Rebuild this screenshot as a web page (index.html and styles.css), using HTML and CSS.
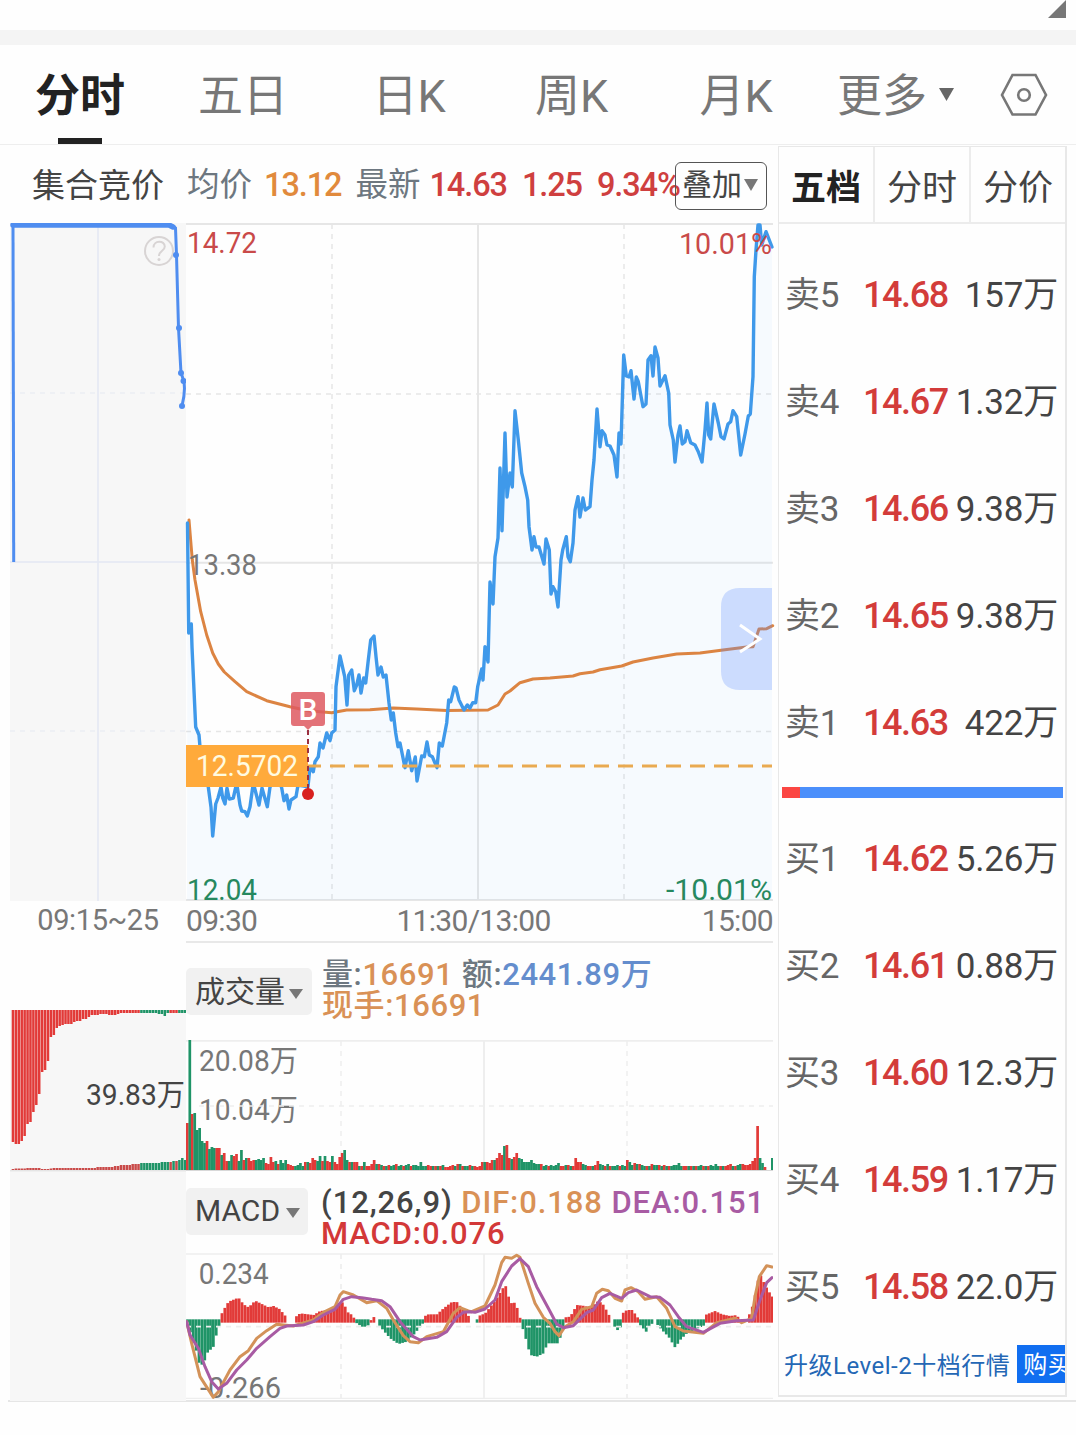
FILE: index.html
```html
<!DOCTYPE html>
<html lang="zh-CN">

<head>
  <meta charset="UTF-8">
  <meta name="viewport" content="width=device-width, initial-scale=1.0">
  <title>分时行情</title>
  <link rel="stylesheet" href="styles.css">
</head>

<body>

  <div class="top">
    <svg width="18" height="18" viewBox="0 0 18 18"><path d="M18 0V18H0Z" fill="#777"/></svg>
  </div>

  <nav class="tabs">
    <a class="tab active">分时</a>
    <a class="tab">五日</a>
    <a class="tab">日K</a>
    <a class="tab">周K</a>
    <a class="tab">月K</a>
    <a class="tab more">更多 <svg width="15" height="13" viewBox="0 0 15 13"><path d="M0 0H15L7.5 13Z" fill="#666"/></svg></a>
    <a class="tab setting">
      <svg width="48" height="44" viewBox="0 0 48 44" fill="none" stroke="#777" stroke-width="2.6">
        <path d="M12.5 2H35.500L46 22L35.500 41.500H12.500L2 22Z"/>
        <circle cx="24" cy="22" r="5.800"/>
      </svg>
    </a>
  </nav>

  <main class="main">

    <!-- 集合竞价 -->
    <div class="auction">
      <h3>集合竞价</h3>
      <svg class="auction-price" width="176" height="678" viewBox="10 223 176 678">
        <path d="M98 223V901M10 562H186" stroke="#e4e8f3" stroke-width="1.500"/>
        <path d="M10 393H186M10 731H186" stroke="#eceef3" stroke-width="1.500" stroke-dasharray="5 5"/>
        <g fill="none" stroke="#d8d4d4" stroke-width="2">
          <circle cx="159" cy="251" r="14"/>
          <path d="M153.500 247.500C153.500 240 164.800 240 164.800 246.500C164.800 251 159 250.500 159 256"/>
        </g>
        <circle cx="159" cy="259.500" r="1.500" fill="#d8d4d4"/>
        <path class="auction-line" d="M13.700 562L13 225"/>
        <path d="M13 225H169L173 227" fill="none" stroke="#4f8df0" stroke-width="5.500" stroke-linecap="round"/>
        <path class="auction-line" d="M173 226L175.500 228L176.500 255L178.500 328L181 373L183.500 380Q186 390 182 406"/>
        <g fill="#4f8df0">
          <circle cx="176" cy="255" r="3"/>
          <circle cx="179" cy="328" r="3"/>
          <circle cx="181" cy="373" r="3"/>
          <circle cx="183.500" cy="381" r="3"/>
          <circle cx="182" cy="406" r="3"/>
        </g>
      </svg>
      <div class="auction-time">09:15~25</div>
      <svg class="auction-volume" width="176" height="391" viewBox="10 1010 176 391">
        <g id="auctionBars"></g>
        <path d="M10 1170.800H186" stroke="#ddd"/>
        <text x="86" y="1105" textLength="99" lengthAdjust="spacingAndGlyphs" fill="#444">39.83万</text>
      </svg>
    </div>

    <div class="chart">
      <div class="info">
        <span>均价</span><b class="avg">13.12</b><span>最新</span><b>14.63</b><b class="change">1.25</b><b class="rate">9.34%</b>
        <button class="overlay">叠加<svg width="14" height="12" viewBox="0 0 14 12"><path d="M0 0H14L7 12Z" fill="#777"/></svg></button>
      </div>

      <!-- 分时走势 -->
      <svg class="price" width="587" height="678" viewBox="186 223 587 678">
        <path d="M186 224H773M186 562.700H773M186 900H773M478 224V900" class="grid"/>
        <path d="M186 394H773M186 731.500H773M332 224V900M624 224V900" class="grid dash"/>
        <polygon id="priceArea" fill="#4da0ff" fill-opacity="0.045"/>
        <polyline id="avgLine" fill="none" stroke="#dc8442" stroke-width="3" stroke-linejoin="round" stroke-linecap="round"/>
        <polyline id="priceLine" fill="none" stroke="#3f99ea" stroke-width="3.400" stroke-linejoin="round" stroke-linecap="round"/>
        <path d="M306 766H772" stroke="#e9aa51" stroke-width="3" stroke-dasharray="15 9"/>
        <rect x="186" y="745" width="122" height="42" fill="#ffaa3b"/>
        <text x="196" y="776" textLength="102" lengthAdjust="spacingAndGlyphs" fill="#fffbe0">12.5702</text>
        <path d="M308 730V790" stroke="#9c3040" stroke-width="2" stroke-dasharray="5 4"/>
        <circle cx="308" cy="794" r="6" fill="#d8201f"/>
        <path d="M294 692H322Q325 692 325 695V723Q325 726 322 726H312L308 730L304 726H294Q291 726 291 723V695Q291 692 294 692Z" fill="#de5b62" fill-opacity="0.860"/>
        <text x="308" y="719.500" text-anchor="middle" font-weight="500" fill="#fff">B</text>
        <g fill="#c94a49">
          <text x="187" y="253" textLength="70" lengthAdjust="spacingAndGlyphs">14.72</text>
          <text x="679" y="254" textLength="93" lengthAdjust="spacingAndGlyphs">10.01%</text>
        </g>
        <text x="188" y="575" textLength="69" lengthAdjust="spacingAndGlyphs" fill="#777">13.38</text>
        <g fill="#26885f">
          <text x="187" y="899.500" textLength="70" lengthAdjust="spacingAndGlyphs">12.04</text>
          <text x="666" y="899.500" textLength="106" lengthAdjust="spacingAndGlyphs">-10.01%</text>
        </g>
        <path d="M772 588H740Q721 588 721 607V671Q721 690 740 690H772Z" fill="#5c8dff" fill-opacity="0.270"/>
        <path d="M740 625L760 639L740 652" fill="none" stroke="#fff" stroke-width="3"/>
      </svg>

      <div class="axis"><span>09:30</span><span class="noon">11:30/13:00</span><span>15:00</span></div>

      <!-- 成交量 -->
      <div class="sub-head volume-head">
        <button class="select">成交量<svg width="14" height="10" viewBox="0 0 14 10"><path d="M0 0H14L7 10Z" fill="#777"/></svg></button>
        <p><span class="gray">量:</span><span class="orange">16691</span> <span class="gray">额:</span><span class="blue">2441.89万</span><br><span class="orange">现手:16691</span></p>
      </div>
      <svg class="volume" width="587" height="131" viewBox="186 1040 587 131">
        <path d="M186 1040.800H773M484 1041V1170" class="grid light"/>
        <g fill="#777">
          <text x="199" y="1071" textLength="99" lengthAdjust="spacingAndGlyphs">20.08万</text>
          <text x="199" y="1120" textLength="99" lengthAdjust="spacingAndGlyphs">10.04万</text>
        </g>
        <path d="M199 1106H773M341 1041V1170M627 1041V1170" class="grid light dash"/>
        <g id="volumeBars"></g>
        <path d="M186 1170.500H773" stroke="#d8d8d8"/>
      </svg>

      <!-- MACD -->
      <div class="sub-head macd-head">
        <button class="select">MACD<svg width="14" height="10" viewBox="0 0 14 10"><path d="M0 0H14L7 10Z" fill="#777"/></svg></button>
        <p><span class="black">(12,26,9)</span> <span class="orange">DIF:0.188</span> <span class="purple">DEA:0.151</span><br><span class="red">MACD:0.076</span></p>
      </div>
      <svg class="macd" width="587" height="146" viewBox="18 219 1761 438">
        <path d="M18 222H1779M18 656H1779M912 222V656" class="grid light"/>
        <path d="M483 222V656M1341 222V656" class="grid light dash"/>
        <g fill="#777">
          <text x="56" y="312" textLength="210" lengthAdjust="spacingAndGlyphs">0.234</text>
          <text x="60" y="654" textLength="243" lengthAdjust="spacingAndGlyphs">-0.266</text>
        </g>
        <g id="macdBars"></g>
        <path d="M18 440H1779" class="grid light dash"/>
        <g fill="none" stroke-width="9" stroke-linejoin="round" stroke-linecap="round">
          <polyline id="difLine" stroke="#d39259"/>
          <polyline id="deaLine" stroke="#a85ba3"/>
        </g>
      </svg>
    </div>

    <!-- 五档盘口 -->
    <aside class="panel">
      <div class="panel-tabs"><a class="active">五档</a><a>分时</a><a>分价</a></div>
      <div class="rows">
        <div class="row"><span>卖5</span><b>14.68</b><i>157万</i></div>
        <div class="row"><span>卖4</span><b>14.67</b><i>1.32万</i></div>
        <div class="row"><span>卖3</span><b>14.66</b><i>9.38万</i></div>
        <div class="row"><span>卖2</span><b>14.65</b><i>9.38万</i></div>
        <div class="row"><span>卖1</span><b>14.63</b><i>422万</i></div>
      </div>
      <div class="ratio"><div class="ratio-buy" style="width: 6.4%"></div></div>
      <div class="rows">
        <div class="row"><span>买1</span><b>14.62</b><i>5.26万</i></div>
        <div class="row"><span>买2</span><b>14.61</b><i>0.88万</i></div>
        <div class="row"><span>买3</span><b>14.60</b><i>12.3万</i></div>
        <div class="row"><span>买4</span><b>14.59</b><i>1.17万</i></div>
        <div class="row"><span>买5</span><b>14.58</b><i>22.0万</i></div>
      </div>
      <div class="upgrade"><span>升级Level-2十档行情</span><a>购买</a></div>
    </aside>

  </main>

  <script src="script.js"></script>
</body>

</html>
```
FILE: styles.css
```css
* {
  box-sizing: border-box;
}

body {
  font-family: Roboto, "Noto Sans CJK SC", sans-serif;
  margin: 0;
  background: #fefefe;
  color: #444;
  width: 1076px;
  height: 1435px;
  overflow: hidden;
}

svg {
  display: block;
}

svg text {
  font-size: 30px;
}

.macd text {
  font-size: 90px;
}

.top {
  height: 45px;
  padding-right: 10px;
  border-bottom: 15px solid #f4f4f4;
  display: flex;
  justify-content: flex-end;
}

.tabs {
  height: 100px;
  border-bottom: 1px solid #eee;
  display: grid;
  grid-template-columns: 160px 166px 166px 159px 170px 161px 1fr;
}

.tab {
  position: relative;
  display: flex;
  align-items: center;
  justify-content: center;
  padding-top: 4px;
  line-height: 1;
  font-size: 45px;
  color: #777;
}

.tab.active {
  color: #222;
  font-weight: bold;
}

.tab.active::after {
  content: "";
  position: absolute;
  bottom: 0;
  left: 58px;
  width: 44px;
  height: 6px;
  background: #222;
}

.more {
  justify-content: flex-start;
  padding-left: 16px;
  gap: 12px;
}

.more svg {
  margin-bottom: 4px;
}

.setting {
  justify-content: flex-start;
  padding-top: 0;
  padding-left: 18px;
}

.main {
  height: 1257px;
  margin-left: 8px;
  padding-left: 2px;
  border-bottom: 2px solid #e6e6e6;
  display: flex;
}

.auction {
  width: 176px;
}

.auction h3 {
  margin: 0;
  height: 78px;
  line-height: 81px;
  padding-left: 22px;
  font-size: 33px;
  font-weight: normal;
}

.auction-price,
.auction-volume {
  background: #f7f7f7;
}

.auction-line {
  fill: none;
  stroke: #4f8df0;
  stroke-width: 3;
}

.auction-time {
  height: 109px;
  line-height: 38px;
  text-align: center;
  font-size: 29px;
  letter-spacing: -0.4px;
  color: #777;
}

.chart {
  width: 587px;
}

.info {
  position: relative;
  height: 78px;
  padding-top: 3px;
  padding-left: 1px;
  display: flex;
  align-items: center;
  white-space: nowrap;
  line-height: 1;
  font-size: 32.5px;
  color: #6d7780;
}

.info b {
  font-weight: 500;
  letter-spacing: -1.1px;
  margin-left: 9px;
  color: #cf3f3f;
}

.info .avg {
  margin-left: 12px;
  margin-right: 14px;
  color: #e18a3c;
}

.info .change {
  margin-left: 15px;
}

.info .rate {
  margin-left: 15px;
  letter-spacing: -1.1px;
}

.overlay {
  position: absolute;
  right: 6px;
  top: 17px;
  width: 92px;
  height: 48px;
  padding: 0 0 2px 6px;
  border: 1.5px solid #555;
  border-radius: 6px;
  background: none;
  display: flex;
  align-items: center;
  gap: 2px;
  font: inherit;
  font-size: 30px;
  color: #444;
}

.price {
  overflow: visible;
}

.grid {
  fill: none;
  stroke: #e6e6e6;
  stroke-width: 2;
}

.grid.light {
  stroke: #eee;
}

.grid.dash {
  stroke-width: 1.5;
  stroke-dasharray: 5 5;
}

.macd .grid {
  stroke-width: 5;
}

.macd .dash {
  stroke-dasharray: 15 15;
}

.axis {
  height: 42px;
  border-bottom: 2px solid #e8e8e8;
  display: flex;
  justify-content: space-between;
  line-height: 40px;
  font-size: 30px;
  letter-spacing: -0.7px;
  color: #777;
}

.noon {
  margin-right: 12px;
}

.sub-head {
  display: flex;
  align-items: flex-start;
  gap: 10px;
  font-size: 31px;
}

.volume-head {
  height: 97px;
  padding-top: 25px;
}

.macd-head {
  height: 82px;
  padding-top: 17px;
}

.sub-head p {
  margin: -9px 0 0;
  line-height: 31px;
  font-weight: 500;
  letter-spacing: 0.6px;
  white-space: nowrap;
}

.macd-head p {
  margin-top: -1px;
  margin-left: 3px;
  letter-spacing: 0.9px;
}

.select {
  height: 47px;
  padding: 0 9px;
  border: 0;
  border-radius: 5px;
  background: #f1f1f1;
  display: flex;
  align-items: center;
  gap: 4px;
  font: inherit;
  font-size: 30px;
  line-height: 1;
  color: #444;
}

.macd-head .select {
  padding: 0 8px 2px 9px;
  gap: 6px;
}

.select svg {
  margin-top: 5px;
}

.gray { color: #6d7780; }
.orange { color: #d99156; }
.blue { color: #648dcd; }
.purple { color: #a85ba3; }
.red { color: #d33838; }
.black { color: #444; }

.panel {
  width: 289px;
  height: 1251px;
  margin-top: 1px;
  margin-left: 5px;
  border: 2px solid #e8e8e8;
  border-width: 1px 2px 2px 1px;
  flex-shrink: 0;
  overflow: hidden;
}

.panel-tabs {
  height: 77px;
  border-bottom: 2px solid #ececec;
  display: flex;
}

.panel-tabs a {
  flex: 1;
  display: flex;
  align-items: center;
  justify-content: center;
  padding-top: 7px;
  border-left: 2px solid #ececec;
  line-height: 1;
  font-size: 35px;
}

.panel-tabs a:first-child {
  border-left: 0;
}

.panel-tabs .active {
  font-weight: bold;
  color: #222;
}

.rows {
  padding-top: 17px;
}

.ratio + .rows {
  padding-top: 7px;
}

.row {
  height: 107px;
  line-height: 109px;
  padding: 0 7px 0 6px;
  display: flex;
  font-size: 35px;
  letter-spacing: -0.2px;
}

.row span {
  width: 78px;
  color: #666;
}

.row b {
  font-weight: 500;
  font-size: 36px;
  letter-spacing: -1.4px;
  color: #d33c3a;
}

.row i {
  flex: 1;
  font-style: normal;
  letter-spacing: -0.2px;
  text-align: right;
}

.ratio {
  height: 11px;
  margin: 11px 2px 0 3px;
  background: #4b8ffb;
}

.ratio-buy {
  height: 11px;
  background: #fb4643;
}

.upgrade {
  height: 48px;
  display: flex;
  align-items: center;
  gap: 7px;
  padding-left: 5px;
  white-space: nowrap;
  line-height: 1;
  font-size: 24px;
  letter-spacing: 0.5px;
  color: #2467b5;
}

.upgrade span {
  padding-top: 3px;
}

.upgrade a {
  height: 38px;
  line-height: 40px;
  padding: 0 6px;
  background: #116ef0;
  color: #fff;
}
```
FILE: script.js
```javascript
const RED = '#e23a38';
const GREEN = '#1f9467';

const price = [
  [187.5,523],[188.7,633],[191.3,624],[192,647],[195.7,727],[199,735],[200.5,753],[208.3,787],[211,807],[212.7,836],
  [215.7,804],[218,798],[221,787],[222.7,798],[225,804],[227,788],[229.3,799],[233.3,798],[236.7,783],[240,805],
  [241.7,811],[245,811.7],[247.3,816],[250,806.7],[253.3,783],[259,805],[262,788],[267.3,806.7],[270,787],[278,777],
  [281.7,788],[284,800.7],[286.7,795],[289,809],[291,800],[296,796.7],[298,785],[308,786.7],[310,766.7],[313.3,771.7],
  [315,761.7],[318.3,756.7],[320,743],[323,748],[326.7,733],[330,740.7],[331.7,733],[335,730],[336,686.7],[337.3,676.7],
  [340,656],[344.7,676.7],[347,705],[348.7,675],[351.7,670],[354.3,690.7],[356.7,685],[359,675],[361,693],[363.7,678],
  [365.7,683],[368.3,660],[370.7,640],[374,636],[376,656.7],[378,675],[381,667],[383.3,677],[386,675],[389,703],
  [391.3,720],[393.3,713],[395.7,733],[398,746.7],[400,743],[405,767.7],[408.3,750.7],[411.7,770.7],[415.3,757],[417,781],
  [421.7,756],[424.3,756.7],[427,742],[429.3,755],[432.3,756.7],[437,767.7],[439.3,743],[442.3,746],[446.7,723],[448.7,700],
  [450.7,701.7],[454.3,687],[456,688],[459,700],[464,710],[467.3,705],[470,708],[472.7,702.7],[475.7,702.7],[477.7,686.7],
  [481.7,669],[483,680],[485,646.7],[488,662],[490,582],[493,604],[495,556.7],[498,538],[500,468],[502,530.7],
  [505,433],[507,497],[510,473],[512.3,487],[515,410.7],[518.3,440],[521.7,473],[525,486.7],[527.7,500],[529,526.7],
  [532,550],[534,536.7],[536,547],[539,547],[544,564],[546,539],[549.3,550],[551,594],[553,586.7],[555.7,591.7],
  [558,607],[561,560],[562.7,550],[566.3,536.7],[568,556.7],[570.3,561.7],[573,543],[575,510],[578,496.7],[580,517],
  [583,498],[585.3,510],[590,506.7],[592,480],[594,460],[597,409],[600,446.7],[602,430.7],[605,435],[607,445],
  [610,446],[614,455],[617,477],[619,433],[621,444],[623.7,355],[626.3,376],[629,377],[631,370.7],[634,399],
  [636.3,377],[638.3,381.7],[643,406.7],[646,404],[648,360],[651,355.7],[653,376],[655,347],[658,358],[660,386],
  [665,375.7],[668.7,393],[670,425],[673.3,440],[675,462],[678,435],[680,426],[682.3,444],[685,441.7],[687,430.7],
  [690.7,442.7],[695,445],[698.3,451.7],[702,462],[705,430],[707,403],[708.7,435],[710.7,439],[714,404],[718.3,423],
  [721,436.7],[724,439],[728,424],[730.7,421.7],[733,410.7],[736.7,416.7],[740.7,455],[745,434],[748.3,416],[750.3,414],
  [753,376.7],[754.3,276.7],[756,250],[758,225],[760,225],[761.7,245],[766,231.7],[772,247]
];

const avg = [
  [189,520],[192.3,560],[195,580],[200.7,611.7],[206.7,635],[212.7,653],[218.3,664],[224.3,672],[235,681.7],[246.7,691.7],
  [266.7,700.7],[290,706.7],[308.3,710.7],[331.7,712.7],[346.7,710],[370,709.7],[393.3,708],[416.7,709],[446.7,710.5],[488,710],
  [498,705],[505,694],[510,691],[520,682.7],[533,679],[550,678],[573,676],[580,673.7],[593,672],[600,669.7],
  [621.7,666],[633,662],[653,658],[676.7,654],[700,653],[723,650],[746.7,647],[753,646.7],[756,638],[759,629],
  [766.7,628.7],[772.7,625.7]
];

// 正数为红柱，负数为绿柱
const volume = [
  47,-130,56,-57,-40,-42,-29,-27,29,-21,-23,-22,22,22,-15,17,9,-9,-15,14,16,-9,-20,10,-12,12,9,10,-10,-11,
  -10,-12,7,6,13,8,-9,6,-10,-7,-10,6,5,4,-4,-5,-7,-4,8,-8,7,12,10,-9,-14,9,-14,9,8,-14,8,6,13,17,
  -20,-10,8,-8,8,8,-4,4,-8,4,4,6,10,-6,6,-5,4,-4,5,-4,-5,6,-4,-5,4,-5,-6,4,-5,-5,-4,-8,-4,-4,5,4,
  -4,4,-4,4,-5,3,3,4,5,-4,6,-6,4,-4,-4,5,-4,4,3,4,8,-8,8,7,10,-10,12,17,15,-24,25,12,-11,13,17,-12,
  -11,-8,-8,-8,-10,-7,-6,-6,6,-4,-5,4,-5,-4,-5,-7,4,4,-5,5,-4,4,12,8,8,-6,-5,4,4,-4,5,9,-6,-5,4,-6,
  4,-4,-4,-5,4,-5,-4,10,-8,-5,7,-6,6,-5,-4,4,-4,6,-5,-5,5,-4,5,-4,4,-4,-5,-5,-7,-4,4,4,-4,4,-4,4,
  -4,-5,4,-4,4,-5,-4,-6,-4,4,-4,4,5,6,-4,4,-5,-6,6,5,5,6,9,12,44,-12,-7,3,0,0,-12
];

const auctionTop = [
  132,134,134,131,126,114,112,102,95,84,62,60,51,27,25,18,16,15,14,14,14,12,11,11,9,9,7,5,5,5,
  4,4,4,5,5,5,4,3,3,3,3,3,3,3,-3,-3,-3,-3,-3,-3,-4,-4,-6,-3,3,3,3,-3,-3,-3
];
const auctionBottom = [
  1,1.5,1.5,1.5,1.5,2,2,2,2,2,1,1,1,1.5,2,2,2,2,2,2,2,2,2,2,2,2,2,2,2,3,
  3,3,3,3,3,4,4,5,5,5,5,6,6,6,-7,-7,-7,-7,-7,-7,-7,-8,-8,-8,8,-9,9,-10,-12,-10
];

const AFTERNOON = 870;
const ZERO = 423;

const dif = [
  [20,425],[35,490],[60,590],[100,652],[115,635],[150,570],[180,530],[205,512],[230,475],[260,452],[290,433],[340,438],
  [400,420],[430,397],[465,380],[480,345],[490,335],[520,345],[560,368],[590,362],[620,385],[640,420],[670,467],[690,485],
  [715,488],[740,470],[790,455],[820,400],[840,383],[865,393]
];
const difPm = [
  [5,395],[45,378],[75,315],[95,248],[105,232],[125,235],[140,226],[150,232],[175,310],[195,370],[220,412],[240,430],
  [255,455],[267,467],[285,440],[310,425],[335,388],[365,380],[380,340],[397,328],[415,332],[435,355],[455,363],[465,330],
  [483,323],[505,335],[525,358],[560,350],[590,385],[615,440],[640,453],[700,460],[740,428],[795,415],[815,428],[845,415],
  [855,350],[868,290],[890,257],[906,261]
];
const dea = [
  [20,425],[30,465],[55,505],[75,560],[95,605],[115,627],[140,610],[170,570],[200,540],[230,505],[270,470],[300,445],
  [320,438],[370,435],[400,425],[430,405],[465,388],[490,358],[515,350],[545,353],[575,358],[605,362],[630,380],[660,425],
  [700,470],[720,480],[770,472],[800,455],[830,412],[850,397],[870,395]
];
const deaPm = [
  [15,397],[45,387],[75,360],[95,305],[125,258],[150,236],[175,260],[200,320],[235,385],[260,432],[280,443],[310,437],
  [350,398],[370,390],[395,353],[420,340],[455,355],[475,338],[500,330],[540,350],[570,352],[600,375],[625,410],[650,440],
  [700,457],[750,430],[800,422],[850,420],[870,360],[890,308],[906,293]
];
const hist = [
  [22,428],[30,455],[45,500],[58,555],[70,553],[80,520],[100,500],[112,450],[119,432],[120,410],[130,390],[145,365],
  [175,353],[190,373],[205,382],[225,362],[245,372],[265,382],[280,378],[300,388],[312,405],[320,410],[322,423],[344,423],
  [347,410],[360,400],[400,405],[420,393],[450,390],[475,370],[485,365],[495,380],[505,400],[518,405],[525,425],[530,430],
  [545,440],[560,440],[570,430],[575,410],[585,412],[590,425],[600,440],[630,475],[655,492],[680,485],[700,465],[720,440],
  [728,430],[730,410],[745,403],[770,403],[790,385],[815,366],[830,366],[845,385],[865,408],[867,423],[884,423]
];
const histPm = [
  [15,428],[22,428],[25,408],[45,400],[75,362],[95,330],[105,312],[113,345],[125,372],[135,367],[145,395],[150,415],
  [153,430],[165,470],[180,525],[200,530],[220,520],[232,490],[265,490],[280,440],[285,412],[300,410],[320,375],[345,378],
  [360,385],[385,362],[400,375],[418,408],[420,423],[427,423],[428,430],[440,452],[455,438],[457,400],[470,390],[485,390],
  [500,408],[508,423],[510,435],[528,455],[540,433],[550,430],[555,423],[560,432],[575,450],[595,470],[615,503],[630,480],
  [650,460],[700,437],[705,405],[735,393],[755,403],[780,408],[800,405],[815,430],[830,423],[850,370],[868,278],[880,305],
  [893,330],[908,352]
];

function shift(list) {
  return list.map(p => [p[0] + AFTERNOON, p[1]]);
}

function setPoints(id, list) {
  document.getElementById(id).setAttribute('points', list.map(p => p.join(',')).join(' '));
}

function bar(id, x, y, w, h, color) {
  const rect = document.createElementNS('http://www.w3.org/2000/svg', 'rect');
  rect.setAttribute('x', x);
  rect.setAttribute('y', y);
  rect.setAttribute('width', w);
  rect.setAttribute('height', h);
  rect.setAttribute('fill', color);
  document.getElementById(id).appendChild(rect);
}

function valueAt(list, x) {
  for (let i = 1; i < list.length; i++) {
    if (x <= list[i][0]) {
      const a = list[i - 1];
      const b = list[i];
      return a[1] + (b[1] - a[1]) * (x - a[0]) / (b[0] - a[0]);
    }
  }
  return list[list.length - 1][1];
}

setPoints('priceLine', price);
setPoints('priceArea', price.concat([[772, 900], [187, 900]]));
setPoints('avgLine', avg);
setPoints('difLine', dif.concat(shift(difPm)));
setPoints('deaLine', dea.concat(shift(deaPm)));

const step = 585 / (volume.length - 1);
volume.forEach((v, i) => {
  const h = Math.abs(v);
  bar('volumeBars', 186 + i * step, 1170 - h, 2.7, h, v > 0 ? RED : GREEN);
});

auctionTop.forEach((v, i) => {
  bar('auctionBars', 11.7 + i * 2.92, 1010, 2.5, Math.abs(v), v > 0 ? RED : GREEN);
});
auctionBottom.forEach((v, i) => {
  const h = Math.abs(v);
  bar('auctionBars', 11.7 + i * 2.92, 1170 - h, 2.5, h, v > 0 ? '#c94a49' : GREEN);
});

const histAll = hist.concat(shift(histPm));
for (let x = 22; x < 1779; x += 8.6) {
  const y = valueAt(histAll, x);
  if (Math.abs(y - ZERO) < 2) continue;
  if (y < ZERO) {
    bar('macdBars', x - 3.5, y, 8.3, 428 - y, RED);
  } else {
    bar('macdBars', x - 3.5, 418, 8.3, y - 418, GREEN);
  }
}
```
